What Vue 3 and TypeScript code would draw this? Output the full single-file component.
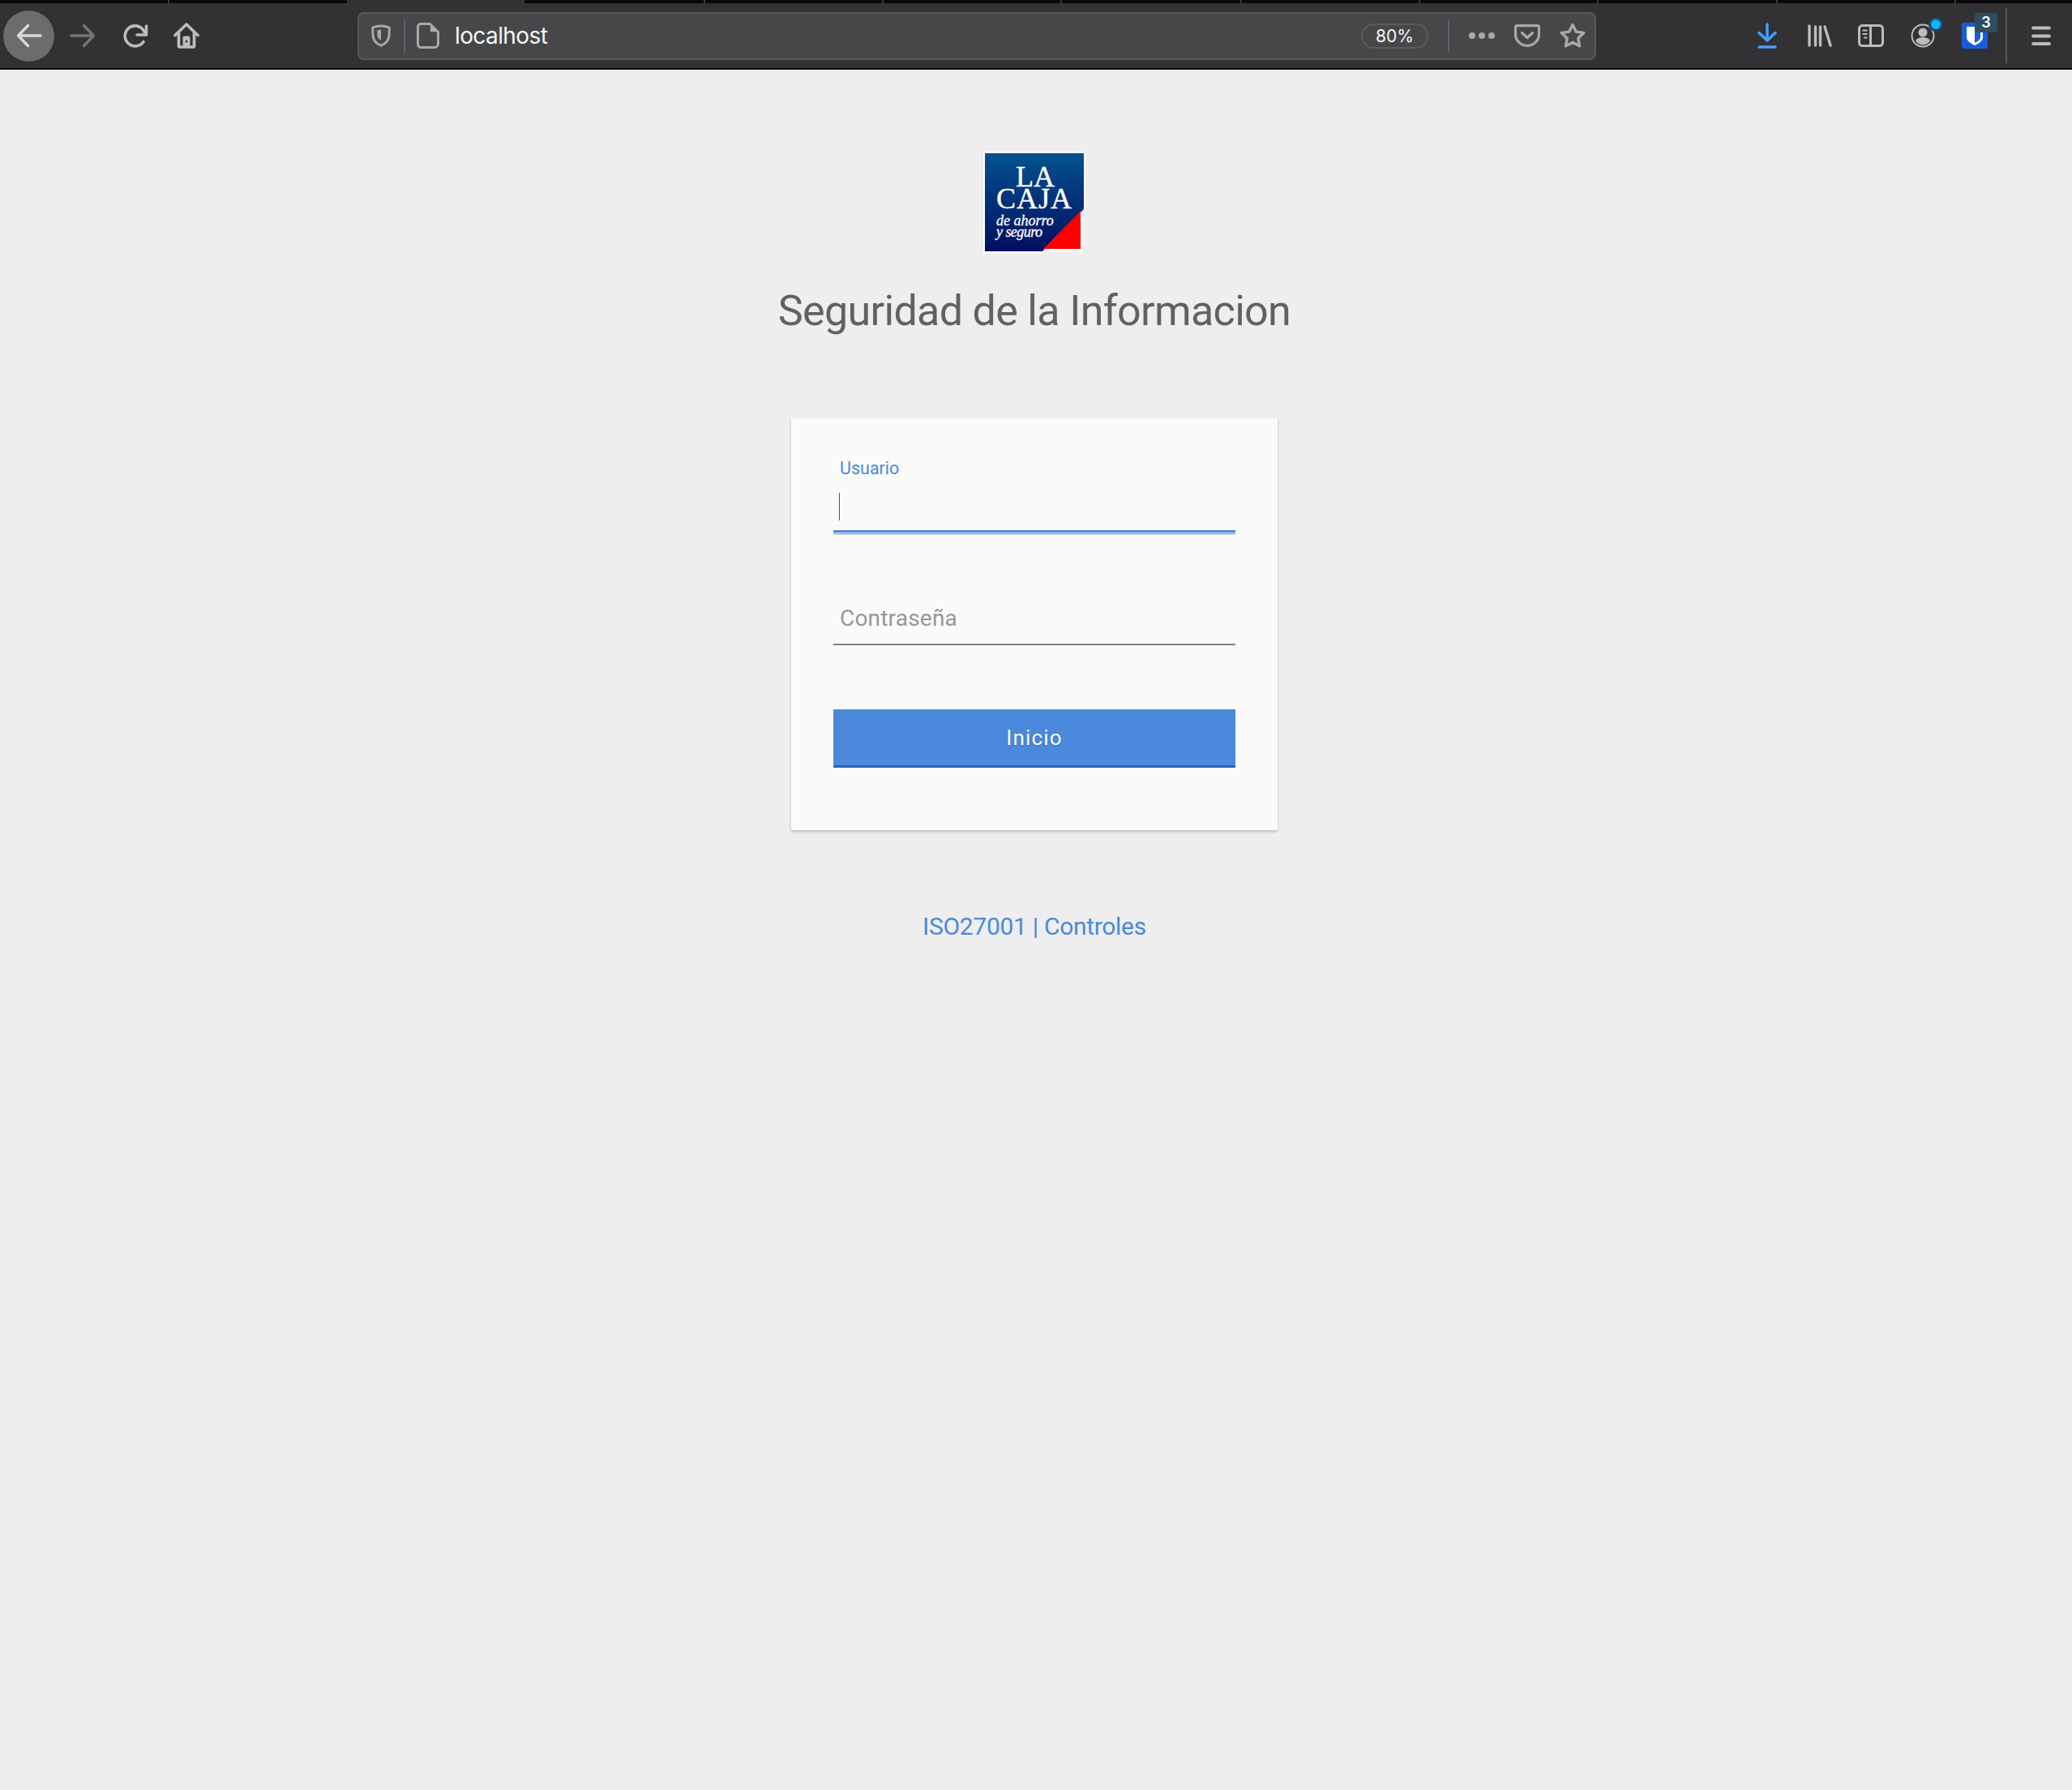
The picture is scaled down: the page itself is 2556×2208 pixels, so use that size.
<template>
  <div class="window">
    <div class="tabstrip">
      <span v-for="tab in tabs" :key="tab.x" class="tab-sep" :style="{ left: tab.x + 'px' }" />
      <span class="tab-active" />
    </div>
    <header class="toolbar">
      <button class="back">
        <svg width="32" height="32" viewBox="0 0 32 32" fill="none" stroke="#d8d8d8" stroke-width="3.4" stroke-linecap="round" stroke-linejoin="round"><path d="M30 16H3M14.500 3.500 2.500 16l12 12.500" /></svg>
      </button>
      <svg class="forward" width="32" height="32" viewBox="0 0 32 32" fill="none" stroke="#747476" stroke-width="3.4" stroke-linecap="round" stroke-linejoin="round"><path d="M2 16h27M17.500 3.500l12 12.500-12 12.500" /></svg>
      <svg class="reload" width="32" height="32" viewBox="0 0 32 32" fill="none" stroke="#bcbcbd" stroke-width="3.6" stroke-linecap="round" stroke-linejoin="round"><path d="M26 23.500A12.500 12.500 0 1 1 25 8l4 6" /><path d="M29.500 4v11H18" /></svg>
      <svg class="home" width="32" height="32" viewBox="0 0 32 32" fill="none" stroke="#bcbcbd" stroke-width="3.7" stroke-linecap="round" stroke-linejoin="round"><path d="M2 15.500 16 2l14 13.500" /><path d="M6.500 12.500v16a1.500 1.500 0 0 0 1.500 1.500h16a1.500 1.500 0 0 0 1.500-1.500v-16" /><path d="M11.500 30V18.500a2 2 0 0 1 2-2h5a2 2 0 0 1 2 2V30Z" fill="#bcbcbd" stroke="none" /><circle cx="16" cy="23" r="1.500" fill="#323234" stroke="none" /></svg>

      <div class="urlbar">
        <svg class="shield" width="24" height="28" viewBox="0 0 26 30"><path d="M13 2c4 0 8 .8 11 2.200v9c0 7-4.500 12.500-11 15-6.500-2.500-11-8-11-15v-9C5 2.800 9 2 13 2Z" fill="none" stroke="#a9a9aa" stroke-width="3.2" /><path d="M13 7c-2 0-3.500.3-5 .9v5.500c0 3.500 2 6.500 5 8Z" fill="#a9a9aa" /></svg>
        <span class="url-sep" />
        <svg class="page" width="28" height="32" viewBox="0 0 28 32" fill="none" stroke="#a9a9aa" stroke-width="3" stroke-linejoin="round"><path d="M5 1.500h11.500l10 10V26a4.500 4.500 0 0 1-4.500 4.500H5.500A4 4 0 0 1 1.500 26V5.500a4 4 0 0 1 3.500-4Z" /><path d="M17.500 3v7.500H25Z" fill="#a9a9aa" stroke-width="1.500" /></svg>
        <span class="url-text">localhost</span>
        <span class="zoom-pill">80%</span>
        <span class="url-sep url-sep-right" />
        <span class="dots"><i /><i /><i /></span>
        <svg class="pocket" width="32" height="28" viewBox="0 0 32 28" fill="none" stroke="#a9a9aa" stroke-width="3.2" stroke-linecap="round" stroke-linejoin="round"><path d="M3.500 1.600h25a2 2 0 0 1 2 2V12c0 8-6.500 14.400-14.500 14.400S1.500 20 1.500 12V3.600a2 2 0 0 1 2-2Z" /><path d="m9.500 10.500 6.500 6 6.500-6" /></svg>
        <svg class="star" width="32" height="32" viewBox="0 0 32 32" fill="none" stroke="#a9a9aa" stroke-width="3.4" stroke-linejoin="round"><path d="m16 2.500 4.200 8.600 9.600 1.400-7 6.700 1.700 9.500-8.500-4.500-8.500 4.500 1.700-9.500-7-6.700 9.600-1.400Z" /></svg>
      </div>

      <svg class="download" width="24" height="32" viewBox="0 0 24 32" fill="none" stroke="#45a1ff" stroke-width="3.4" stroke-linecap="round" stroke-linejoin="round"><path d="M12 2v20M2 12.500 12 22l10-9.500" /><path d="M2 30h20" /></svg>
      <svg class="library" width="30" height="28" viewBox="0 0 30 28" fill="none" stroke="#bcbcbd" stroke-width="3.4" stroke-linecap="round"><path d="M2 2v24M9.500 3v23M15.500 3v23M21 3l7 23" /></svg>
      <svg class="sidebar" width="32" height="28" viewBox="0 0 32 28" fill="none" stroke="#bcbcbd" stroke-width="3"><rect x="1.500" y="1.500" width="29" height="25" rx="4" /><path d="M15.500 2v24" /><path d="M5.500 7.500h6M5.500 12h6M7 16.500h4.500" stroke-width="2.2" /></svg>
      <div class="account">
        <svg width="30" height="30" viewBox="0 0 30 30"><circle cx="15" cy="15" r="13.500" fill="none" stroke="#bcbcbd" stroke-width="2" /><circle cx="15" cy="11" r="5.500" fill="#bcbcbd" /><path d="M6 21c2-3 5-4 9-4s7 1 9 4c-2 3-5 5.500-9 5.500S8 24 6 21Z" fill="#bcbcbd" /></svg>
        <span class="account-dot" />
      </div>
      <div class="bitwarden">
        <svg width="32" height="32" viewBox="0 0 32 32"><rect width="32" height="32" rx="3" fill="#175ddc" /><path d="M6 5h20v13c0 5-6 8-10 10-4-2-10-5-10-10Z" fill="#fff" /><path d="M16 8h7v10c0 3-4 5.500-7 7Z" fill="#175ddc" /></svg>
        <span class="bit-badge">3</span>
      </div>
      <span class="tool-sep" />
      <svg class="menu" width="24" height="24" viewBox="0 0 24 24" stroke="#bcbcbd" stroke-width="3.8" stroke-linecap="round"><path d="M2 2.500h20M2 12.500h20M2 22h20" /></svg>
    </header>

    <main class="page-body">
      <div class="logo">
        <svg width="126" height="126" viewBox="0 0 126 126">
          <defs>
            <linearGradient id="logoBlue" x1="0" y1="0" x2="0" y2="1">
              <stop offset="0" stop-color="#04528f" />
              <stop offset="1" stop-color="#000f5e" />
            </linearGradient>
          </defs>
          <path d="M0 0h126v71l-3 3v50H73l-3 2H0Z" fill="#fff" />
          <path d="M2 2h122v69l-51 52H2Z" fill="url(#logoBlue)" />
          <path d="M120 73v47H74Z" fill="#fe0000" />
          <text x="64" y="43" class="logo-big" text-anchor="middle">LA</text>
          <text x="16" y="70" class="logo-big" textLength="93">CAJA</text>
          <text x="16" y="91" class="logo-small">de ahorro</text>
          <text x="16" y="104.500" class="logo-small" textLength="57">y seguro</text>
        </svg>
      </div>
      <h1 class="title">Seguridad de la Informacion</h1>

      <form class="card" @submit.prevent>
        <div class="field field-active">
          <label class="float-label">Usuario</label>
          <span class="caret" />
        </div>
        <div class="field field-idle">
          <span class="placeholder">Contraseña</span>
        </div>
        <button class="submit" type="submit">Inicio</button>
      </form>

      <a class="footer-link" href="#">ISO27001 | Controles</a>
    </main>
  </div>
</template>

<script setup lang="ts">
const tabs = [
  { x: 207 }, { x: 868 }, { x: 1088 }, { x: 1308 }, { x: 1530 },
  { x: 1750 }, { x: 1970 }, { x: 2191 }, { x: 2411 },
];
</script>

<style scoped>
.window {
  min-height: 2208px;
  background: #eeeeee;
  font-family: Roboto, "Liberation Sans", sans-serif;
}

.tabstrip {
  position: relative;
  height: 4px;
  background: #09090b;
}

.tab-sep {
  position: absolute;
  top: 0;
  width: 2px;
  height: 4px;
  background: #3a3a3c;
}

.tab-active {
  position: absolute;
  top: 0;
  left: 428px;
  width: 219px;
  height: 4px;
  background: #323234;
}

.toolbar {
  display: flex;
  align-items: center;
  height: 80px;
  background: #323234;
  border-bottom: 2px solid #0c0c0d;
}

.toolbar svg {
  flex: none;
  display: block;
}

.back {
  flex: none;
  display: flex;
  align-items: center;
  justify-content: center;
  width: 65px;
  height: 65px;
  margin-left: 3px;
  padding: 0;
  border: 1px solid #2a2a2c;
  border-radius: 50%;
  background: #6c6c6e;
}

.forward {
  margin-left: 18px;
}

.reload {
  margin-left: 33px;
}

.home {
  margin-left: 31px;
}

.urlbar {
  display: flex;
  align-items: center;
  flex: none;
  box-sizing: border-box;
  width: 1528px;
  height: 59px;
  margin-left: 195px;
  padding-left: 15px;
  background: #47474a;
  border: 2px solid #59595c;
  border-radius: 8px;
  color: #fff;
}

.url-sep {
  flex: none;
  width: 2px;
  height: 41px;
  margin-left: 16px;
  background: #5f6068;
}

.page {
  margin-left: 14px;
}

.url-text {
  margin-left: 19px;
  font-family: Inter, Roboto, sans-serif;
  font-size: 28px;
  letter-spacing: -0.6px;
  color: #f6f6f6;
}

.zoom-pill {
  box-sizing: border-box;
  width: 83px;
  height: 31px;
  margin-left: auto;
  border: 2px solid #5b5b5e;
  border-radius: 16px;
  font-family: Inter, Roboto, sans-serif;
  font-size: 21px;
  line-height: 27px;
  text-align: center;
  color: #f6f6f6;
}

.url-sep-right {
  margin-left: 24px;
}

.dots {
  display: flex;
  gap: 4px;
  margin-left: 24px;
}

.dots i {
  width: 8px;
  height: 8px;
  border-radius: 50%;
  background: #a9a9aa;
}

.pocket {
  margin-left: 24px;
}

.star {
  margin-left: 24px;
  margin-right: 11px;
}

.download {
  margin-left: 199px;
}

.library {
  margin-left: 38px;
}

.sidebar {
  margin-left: 32px;
}

.account {
  position: relative;
  flex: none;
  width: 30px;
  height: 30px;
  margin-left: 33px;
}

.account-dot {
  position: absolute;
  top: -5px;
  right: -7px;
  width: 12px;
  height: 12px;
  border-radius: 50%;
  background: #0ab4ff;
  box-shadow: 0 0 0 3px #1d4a5c;
}

.bitwarden {
  position: relative;
  flex: none;
  width: 32px;
  height: 32px;
  margin-left: 33px;
}

.bit-badge {
  position: absolute;
  top: -12px;
  left: 16px;
  width: 28px;
  height: 24px;
  border-radius: 4px;
  background: #2f4d5e;
  color: #fff;
  font-family: Inter, sans-serif;
  font-size: 18px;
  font-weight: 600;
  line-height: 24px;
  text-align: center;
}

.tool-sep {
  flex: none;
  width: 2px;
  height: 68px;
  margin-left: 22px;
  background: #59595b;
}

.menu {
  margin-left: 30px;
}

.page-body {
  display: flex;
  flex-direction: column;
  align-items: center;
  padding-top: 101px;
  padding-right: 4px;
}

.logo {
  width: 126px;
  height: 126px;
}

.logo svg {
  display: block;
}

.logo-big {
  font-family: "Liberation Serif", serif;
  font-size: 36px;
  fill: #fff;
  stroke: #fff;
  stroke-width: 0.4px;
}

.logo-small {
  font-family: "Liberation Serif", serif;
  font-style: italic;
  font-size: 18px;
  fill: #fff;
  stroke: #fff;
  stroke-width: 0.3px;
}

.title {
  margin: 39px 0 0;
  font-size: 52px;
  font-weight: 400;
  line-height: 64px;
  letter-spacing: -0.67px;
  color: #616161;
}

.card {
  box-sizing: border-box;
  width: 600px;
  height: 508px;
  margin-top: 100px;
  padding: 0 52px;
  background: #fafafa;
  box-shadow: 0 2px 3px rgba(0, 0, 0, 0.22);
}

.field {
  position: relative;
}

.field-active {
  height: 142px;
  border-bottom: 1px solid #777;
}

.field-active::after {
  content: "";
  position: absolute;
  left: 0;
  right: 0;
  bottom: 1px;
  height: 3px;
  background: #4a89dc;
}

.float-label {
  position: absolute;
  top: 49px;
  left: 8px;
  font-size: 21.5px;
  color: #4a89dc;
}

.caret {
  position: absolute;
  top: 92px;
  left: 7px;
  width: 1px;
  height: 34px;
  background: #555;
}

.field-idle {
  height: 135px;
  border-bottom: 2px solid #808080;
}

.placeholder {
  position: absolute;
  bottom: 15px;
  left: 8px;
  font-size: 28px;
  letter-spacing: 0.2px;
  color: #979797;
}

.submit {
  display: block;
  width: 100%;
  height: 72px;
  margin-top: 79px;
  border: 0;
  border-bottom: 3px solid #2f5fbb;
  background: #4a89dc;
  color: #fff;
  font-family: Roboto, sans-serif;
  font-size: 26px;
  font-weight: 400;
  letter-spacing: 1.2px;
  text-shadow: 0 1px 2px rgba(0, 0, 0, 0.2);
}

.footer-link {
  margin-top: 99px;
  font-size: 30px;
  line-height: 40px;
  letter-spacing: -0.3px;
  color: #4a89dc;
  text-decoration: none;
}
</style>

<style>
html,
body {
  margin: 0;
  background: #eeeeee;
}
</style>
